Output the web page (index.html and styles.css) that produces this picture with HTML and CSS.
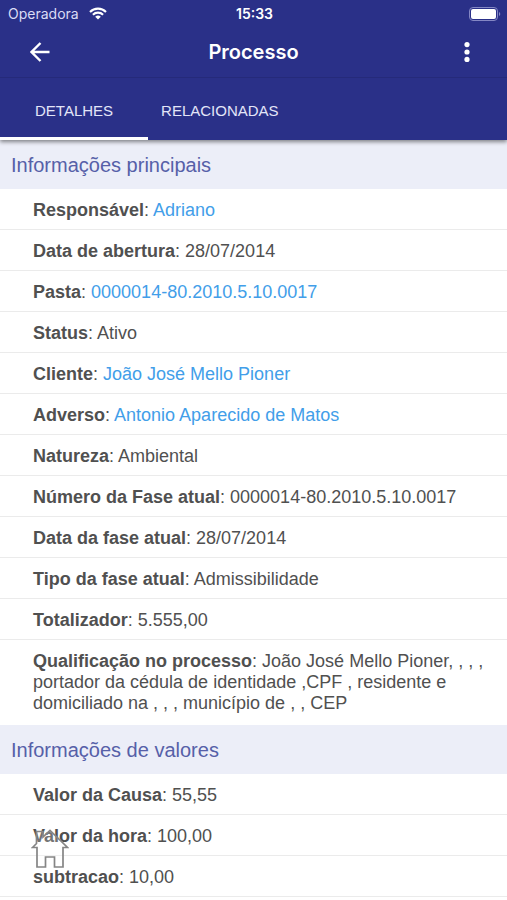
FILE: index.html
```html
<!DOCTYPE html>
<html lang="pt-BR">
<head>
<meta charset="utf-8">
<meta name="viewport" content="width=device-width, initial-scale=1">
<title>Processo</title>
<link rel="stylesheet" href="styles.css">
</head>
<body>
<header class="app-header">
  <div class="status-bar">
    <div class="carrier">
      <span>Operadora</span>
      <svg class="wifi" viewBox="0 0 18 13" aria-hidden="true">
        <path d="M1 4.900a11.400 11.400 0 0 1 16 0M3.900 7.700a7.300 7.300 0 0 1 10.200 0" fill="none" stroke="currentColor" stroke-width="2.100"/>
        <path d="M9 12.600 6.200 9.800a4 4 0 0 1 5.600 0z" fill="currentColor"/>
      </svg>
    </div>
    <span class="clock">15:33</span>
    <svg class="battery" viewBox="0 0 32 14" aria-hidden="true">
      <rect x=".5" y=".5" width="28" height="13" rx="3.500" fill="none" stroke="#8487c4"/>
      <rect x="2" y="2" width="25" height="10" rx="2" fill="#fff"/>
      <path d="M30 5v4a2.200 2.200 0 0 0 0-4z" fill="#8487c4"/>
    </svg>
  </div>
  <div class="toolbar">
    <button class="icon-button" type="button" aria-label="Voltar">
      <svg class="back" viewBox="0 0 20 20" aria-hidden="true"><path d="M19.500 10H2M10.500 1 1.500 10l9 9" fill="none" stroke="currentColor" stroke-width="2.400"/></svg>
    </button>
    <h1 class="title">Processo</h1>
    <button class="icon-button" type="button" aria-label="Mais opções">
      <svg class="more" viewBox="0 0 6 20" aria-hidden="true"><g fill="currentColor"><circle cx="3" cy="2.600" r="2.600"/><circle cx="3" cy="10" r="2.600"/><circle cx="3" cy="17.400" r="2.600"/></g></svg>
    </button>
  </div>
  <nav class="tabs">
    <a class="tab tab-active" href="#detalhes" aria-current="page">DETALHES</a>
    <a class="tab" href="#relacionadas">RELACIONADAS</a>
  </nav>
</header>
<main id="detalhes">
  <section>
    <h2 class="section-title">Informações principais</h2>
    <ul class="fields">
      <li class="field"><b>Responsável</b>: <a href="#adriano">Adriano</a></li>
      <li class="field"><b>Data de abertura</b>: 28/07/2014</li>
      <li class="field"><b>Pasta</b>: <a href="#pasta">0000014-80.2010.5.10.0017</a></li>
      <li class="field"><b>Status</b>: Ativo</li>
      <li class="field"><b>Cliente</b>: <a href="#cliente">João José Mello Pioner</a></li>
      <li class="field"><b>Adverso</b>: <a href="#adverso">Antonio Aparecido de Matos</a></li>
      <li class="field"><b>Natureza</b>: Ambiental</li>
      <li class="field"><b>Número da Fase atual</b>: 0000014-80.2010.5.10.0017</li>
      <li class="field"><b>Data da fase atual</b>: 28/07/2014</li>
      <li class="field"><b>Tipo da fase atual</b>: Admissibilidade</li>
      <li class="field"><b>Totalizador</b>: 5.555,00</li>
      <li class="field field-long"><b>Qualificação no processo</b>: João José Mello Pioner, , , ,<br>portador da cédula de identidade ,CPF , residente e<br>domiciliado na , , , município de , , CEP</li>
    </ul>
  </section>
  <section>
    <h2 class="section-title">Informações de valores</h2>
    <ul class="fields">
      <li class="field"><b>Valor da Causa</b>: 55,55</li>
      <li class="field"><b>Valor da hora</b>: 100,00</li>
      <li class="field"><b>subtracao</b>: 10,00</li>
    </ul>
  </section>
</main>
<a class="home" href="#inicio" aria-label="Início">
  <svg viewBox="0 0 38 40" aria-hidden="true"><path d="M1.500 18.500 5.500 14.500V2.500H12V8L19 1.500 36.500 18.500H32V38H23.500V28H14.500V38H6V18.500z" fill="#fff" fill-opacity=".2" stroke="#858585" stroke-width="1.700"/></svg>
</a>
</body>
</html>
```
FILE: styles.css
```css
* {
  box-sizing: border-box;
}

body {
  margin: 0;
  background: #fff;
  color: #505050;
  font: 18px/21px "Liberation Sans", Arial, sans-serif;
}

a {
  color: #429ee9;
  text-decoration: none;
}

.app-header {
  position: relative;
  background: #2a3088;
  color: #fff;
  box-shadow: 0 2px 4px rgba(0, 0, 0, 0.45);
}

.status-bar {
  display: grid;
  grid-template-columns: 1fr auto 1fr;
  align-items: center;
  height: 27px;
  padding: 0 6px 0 8px;
  font: 14px/20px Inter, sans-serif;
}

.carrier {
  display: flex;
  align-items: center;
  gap: 10px;
  color: #dadcf5;
}

.wifi {
  width: 18px;
  height: 13px;
  color: #fff;
}

.clock {
  font-weight: 600;
}

.battery {
  justify-self: end;
  width: 32px;
  height: 14px;
}

.toolbar {
  display: flex;
  align-items: center;
  justify-content: space-between;
  height: 51px;
  padding: 0 20px;
  border-bottom: 1px solid #252a7a;
}

.icon-button {
  display: flex;
  align-items: center;
  justify-content: center;
  width: 40px;
  height: 40px;
  padding: 0;
  border: 0;
  background: none;
  color: #fff;
}

.back {
  width: 20px;
  height: 20px;
}

.more {
  width: 6px;
  height: 20px;
}

.title {
  margin: 0;
  font: 600 20px/24px Inter, sans-serif;
}

.tabs {
  display: flex;
}

.tab {
  height: 62px;
  padding: 0 13px;
  border-bottom: 3px solid transparent;
  color: #e3e5f8;
  font-size: 15px;
  line-height: 66px;
}

.tab-active {
  padding: 0 35px;
  border-color: #fff;
}

.section-title {
  margin: 0;
  padding: 13px 11px 12px;
  background: #eceef8;
  color: #5660a8;
  font-size: 20px;
  font-weight: 400;
  line-height: 24px;
}

.fields {
  margin: 0;
  padding: 0;
  list-style: none;
}

.field {
  padding: 11px 12px 8px 33px;
  border-bottom: 1px solid #ebebeb;
}

.field-long {
  padding-bottom: 11px;
  border-bottom: 0;
}

.home {
  position: fixed;
  bottom: 31px;
  left: 31px;
  width: 38px;
  height: 40px;
}

.home svg {
  display: block;
}
```
